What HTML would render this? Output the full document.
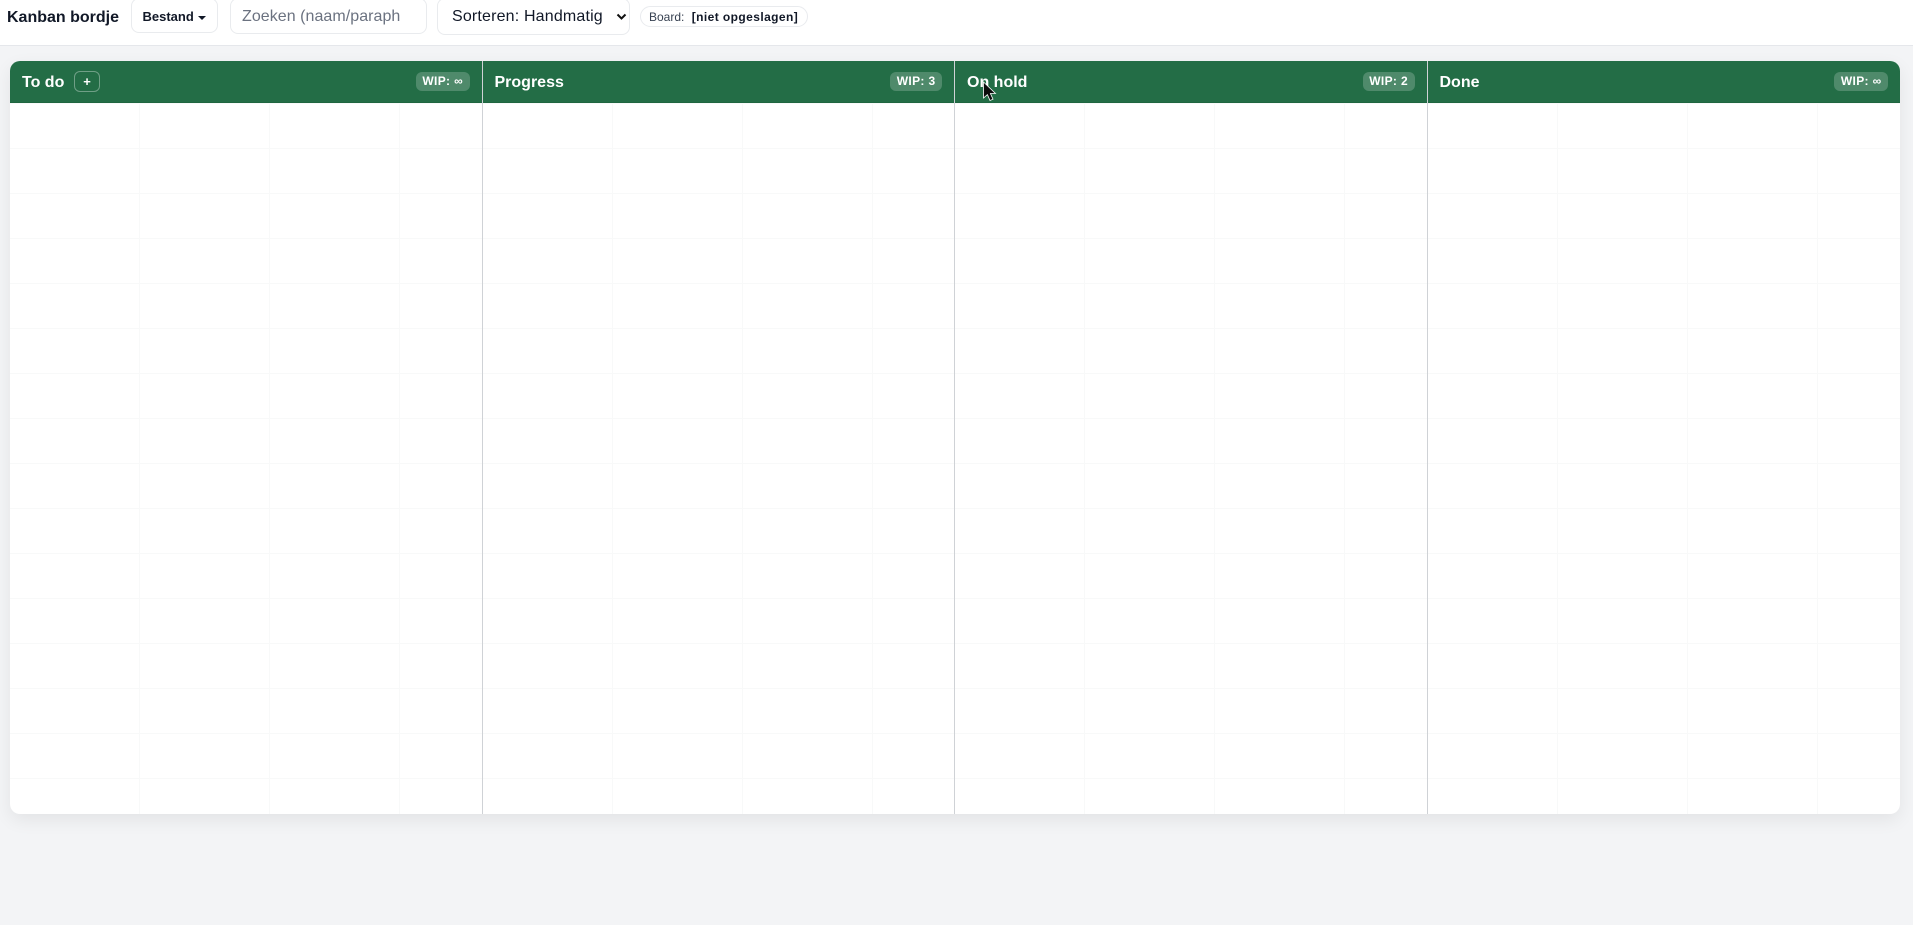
<!DOCTYPE html>
<html lang="nl">
<head>
<meta charset="utf-8">
<title>Kanban bordje</title>
<style>
*{box-sizing:border-box;margin:0;padding:0}
html,body{width:1913px;height:925px;overflow:hidden;background:#f3f4f6;font-family:"Liberation Sans",sans-serif;color:#111827}
#bar{position:absolute;left:0;top:0;width:1913px;height:46px;background:#fff;border-bottom:1px solid #e5e7eb}
#bar>*{position:absolute}
.title{left:7px;top:7px;font-size:16px;font-weight:700;line-height:21px;letter-spacing:0;white-space:nowrap}
.btn{left:131px;top:-2px;width:87px;height:35px;border:1px solid #e9ebee;border-radius:8px;background:#fff;font-size:13px;font-weight:700;line-height:35px;padding-left:10.5px;white-space:nowrap}
.btn i{position:absolute;left:66px;top:17px;width:0;height:0;border-left:4px solid transparent;border-right:4px solid transparent;border-top:4px solid #111827}
.search{left:230px;top:-2px;width:197px;height:36px;border:1px solid #e9ebee;border-radius:8px;background:#fff;font-size:16px;line-height:36px;padding-left:11px;color:#6b7280;letter-spacing:.05px;white-space:nowrap}
.sel{left:437px;top:-2px;width:193px;height:37px;border:1px solid #e9ebee;border-radius:8px;background:#fff;font-size:16px;line-height:36px;padding-left:14px;letter-spacing:.17px;white-space:nowrap}
.sel svg{position:absolute;left:178px;top:14px}
.pill{left:640px;top:6px;width:168px;height:21px;border:1px solid #e9ebee;border-radius:11px;background:#fff;font-size:12px;line-height:20px;padding-left:8px;color:#374151;white-space:nowrap}
.pill b{color:#111827;margin-left:4px;letter-spacing:.42px}
#board{position:absolute;left:10px;top:61px;width:1890px;height:753px;border-radius:10px;background:#fff;box-shadow:0 6px 18px rgba(0,0,0,.07);overflow:hidden}
.col{position:absolute;top:0;height:753px;width:472.5px;border-left:1px solid #cfd2d6}
.col:first-child{border-left:0}
.head{position:absolute;left:0;top:0;right:0;height:42px;background:#236d46;border-bottom:1px solid #1f6640}
.name{position:absolute;left:12px;top:11px;color:#fff;font-size:16px;font-weight:700;line-height:22px;letter-spacing:0;white-space:nowrap}
.add{position:absolute;left:64px;top:10px;width:26px;height:21px;border:1px solid #6f9f86;border-radius:6px;color:#fff;font-size:13px;font-weight:700;line-height:19px;text-align:center}
.wip{position:absolute;right:12px;top:11px;height:19px;border-radius:6px;background:#4f8a6b;color:#fff;font-size:12px;font-weight:700;line-height:19px;padding:0 6.5px;letter-spacing:.35px;white-space:nowrap}
.grid{position:absolute;left:0;top:42px;right:0;bottom:0;background-image:linear-gradient(to right,#f8f9f9 1px,transparent 1px),linear-gradient(to bottom,#f8f9f9 1px,transparent 1px);background-size:130px 45px;background-position:-1px 0}
#cur{position:absolute;left:982px;top:81px}
</style>
</head>
<body>
<div id="bar">
  <div class="title">Kanban bordje</div>
  <div class="btn">Bestand<i></i></div>
  <div class="search">Zoeken (naam/paraph</div>
  <div class="sel">Sorteren: Handmatig<svg width="11" height="8" viewBox="0 0 11 8"><path d="M1.5 1.5 5.5 5.5 9.5 1.5" fill="none" stroke="#111" stroke-width="2"/></svg></div>
  <div class="pill">Board: <b>[niet opgeslagen]</b></div>
</div>
<div id="board">
  <div class="col" style="left:0"><div class="grid"></div><div class="head"><span class="name">To do</span><span class="add">+</span><span class="wip" style="right:13px">WIP: ∞</span></div></div>
  <div class="col" style="left:471.5px"><div class="grid"></div><div class="head"><span class="name">Progress</span><span class="wip">WIP: 3</span></div></div>
  <div class="col" style="left:944px"><div class="grid"></div><div class="head"><span class="name">On hold</span><span class="wip">WIP: 2</span></div></div>
  <div class="col" style="left:1416.5px;width:473.5px"><div class="grid"></div><div class="head"><span class="name">Done</span><span class="wip">WIP: ∞</span></div></div>
</div>
<svg id="cur" width="16" height="22" viewBox="0 0 16 22"><path d="M1.5 1V17L5.4 13.6 8 19.5 11 18.2 8.4 12.5H13.5Z" fill="#0c0c0c" stroke="#fff" stroke-width=".8"/></svg>
</body>
</html>
